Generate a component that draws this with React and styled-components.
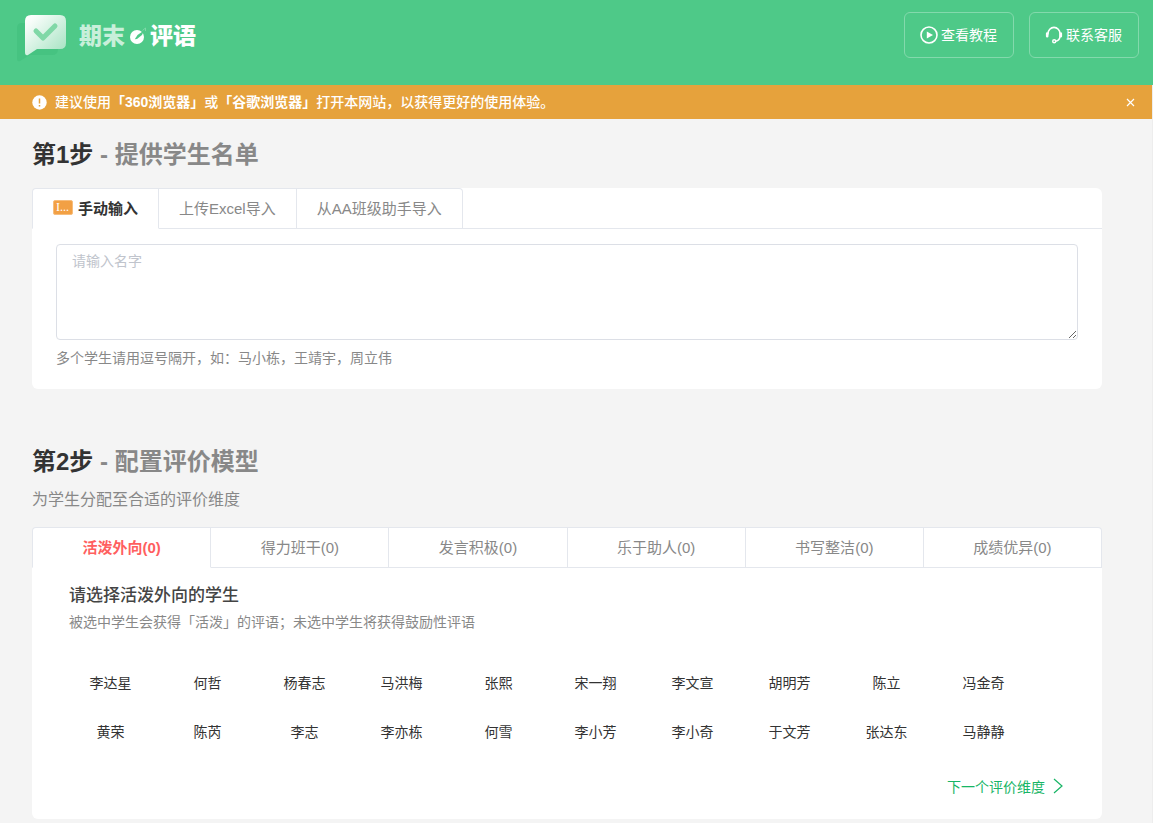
import React, { useState } from "react";
import styled, { createGlobalStyle } from "styled-components";

const GlobalStyle = createGlobalStyle`
  * { box-sizing: border-box; }
  body {
    margin: 0;
    background: #f4f4f4;
    color: #333;
    font-family: "Liberation Sans", "Noto Sans CJK SC", sans-serif;
    font-size: 14px;
  }
  button, textarea { font-family: inherit; }
  h1, h2, h3, p { margin: 0; }
`;

const Header = styled.header`
  display: flex;
  justify-content: space-between;
  align-items: flex-start;
  height: 85px;
  padding: 12px 14px 0 15px;
  background: #4ec988;
`;

const Brand = styled.h1`
  display: flex;
  align-items: center;
  height: 48px;
  color: #fff;
  font-size: 23px;
  font-weight: 900;
  line-height: 32px;
`;

const BrandIcon = styled.svg`
  display: block;
  margin-right: 12px;
`;

const BrandWord = styled.span`
  color: ${(p) => (p.$soft ? "#c8efda" : "#fff")};
`;

const BrandMark = styled.svg`
  display: block;
  margin: 0 2px 0 5px;
`;

const HeaderActions = styled.div`
  display: flex;
  gap: 15px;
`;

const OutlineButton = styled.button`
  display: flex;
  align-items: center;
  justify-content: center;
  gap: 3px;
  width: 110px;
  height: 46px;
  padding: 0 1px 2px 0;
  border: 1px solid #83d9ac;
  border-radius: 6px;
  background: transparent;
  color: #fff;
  font-size: 14px;
`;

const ButtonIcon = styled.svg`
  margin-top: 2px;
`;

const Content = styled.div`
  border-right: 1px solid #ededed;
`;

const Notice = styled.div`
  display: flex;
  align-items: center;
  height: 34px;
  padding: 0 16px 0 32px;
  background: #e6a23c;
  color: #fff;
  font-size: 14px;
`;

const NoticeText = styled.p`
  flex: 1;
  margin-left: 8px;
  font-weight: 500;
  line-height: 20px;
`;

const CloseButton = styled.button`
  display: flex;
  padding: 0;
  border: 0;
  background: transparent;
  color: #fff;
`;

const Main = styled.main`
  padding: 20px 50px 4px 32px;
`;

const Step = styled.section`
  & + & { margin-top: 57px; }
`;

const StepTitle = styled.h2`
  color: #888;
  font-size: 24px;
  font-weight: 700;
  line-height: 32px;
`;

const StepNumber = styled.span`
  color: #333;
`;

const StepHint = styled.p`
  margin-top: 10px;
  color: #888;
  font-size: 16px;
  line-height: 24px;
`;

const Card = styled.div`
  margin-top: ${(p) => (p.$tight ? "15px" : "17px")};
  border-radius: 6px;
  background: #fff;
`;

const TabBar = styled.div`
  display: ${(p) => (p.$fill ? "grid" : "flex")};
  grid-template-columns: calc(100% / 6 + 1px) repeat(5, 1fr);
  box-shadow: inset 0 -1px #e4e7ed;
`;

const Tab = styled.button`
  display: flex;
  align-items: center;
  justify-content: center;
  height: 41px;
  padding: 0 20px 2px;
  border: 1px solid #e4e7ed;
  border-left-width: 0;
  border-bottom-color: ${(p) => (p.$active ? "#fff" : "#e4e7ed")};
  background: #fff;
  color: ${(p) => (p.$active ? p.$accent : "#888")};
  font-size: 15px;
  font-weight: ${(p) => (p.$active ? 700 : 400)};

  &:first-child { border-left-width: 1px; border-top-left-radius: 4px; }
  &:last-child { border-top-right-radius: 4px; }
`;

const TabBadge = styled.span`
  width: 20px;
  height: 15px;
  margin-right: 5px;
  padding-left: 2px;
  border: 1px solid #f7bd7c;
  border-radius: 2px;
  background: #f2a044;
  color: #fff;
  font-family: "Liberation Serif", serif;
  font-size: 12px;
  font-weight: 400;
  line-height: 13px;
  text-align: left;
  white-space: nowrap;
`;

const NameEntry = styled.div`
  padding: 15px 24px 20px;
`;

const NameInput = styled.textarea`
  display: block;
  width: 100%;
  height: 96px;
  padding: 6px 15px;
  border: 1px solid #dcdfe6;
  border-radius: 4px;
  background: #fff;
  color: #606266;
  font-size: 14px;
  line-height: 21px;
  resize: vertical;

  &::placeholder { color: #c0c4cc; }
`;

const InputHint = styled.label`
  display: block;
  margin-top: 8px;
  color: #888;
  font-size: 14px;
  line-height: 21px;
`;

const Picker = styled.div`
  padding: 16px 37px 21px;
`;

const PickerTitle = styled.h3`
  color: #444;
  font-size: 17px;
  font-weight: 500;
  line-height: 24px;
`;

const PickerHint = styled.p`
  margin-top: 3px;
  color: #888;
  font-size: 14px;
  line-height: 22px;
`;

const StudentGrid = styled.div`
  display: grid;
  grid-template-columns: repeat(10, 97px);
  row-gap: 17px;
  margin: 33px 0 0 -7px;
`;

const Student = styled.button`
  height: 32px;
  padding: 0;
  border: 0;
  background: transparent;
  color: ${(p) => (p.$picked ? "#f56c6c" : "#333")};
  font-size: 14px;
`;

const NextButton = styled.button`
  display: flex;
  align-items: center;
  gap: 8px;
  height: 24px;
  margin: 27px 0 0 auto;
  padding: 0 2px 0 0;
  border: 0;
  background: transparent;
  color: #18b566;
  font-size: 14px;
`;

const importTabs = ["手动输入", "上传Excel导入", "从AA班级助手导入"];
const traits = ["活泼外向", "得力班干", "发言积极", "乐于助人", "书写整洁", "成绩优异"];
const students = [
  "李达星", "何哲", "杨春志", "马洪梅", "张熙", "宋一翔", "李文宣", "胡明芳", "陈立", "冯金奇",
  "黄荣", "陈芮", "李志", "李亦栋", "何雪", "李小芳", "李小奇", "于文芳", "张达东", "马静静",
];

function Logo() {
  return (
    <Brand>
      <BrandIcon width="52" height="52" viewBox="0 0 52 52" aria-hidden="true">
        <defs>
          <linearGradient id="bubble" x1="0" y1="0" x2="1" y2="1">
            <stop offset="0" stopColor="#fff" />
            <stop offset=".15" stopColor="#f8fdfa" />
            <stop offset=".85" stopColor="#b0e6c9" />
          </linearGradient>
        </defs>
        <path d="M7 13h30q6 0 6 6v20q0 6-6 6H15L5 51q-3 1-3-2V18q0-5 5-5z" fill="#46c381" />
        <path d="M16 5h29q6 0 6 6v22q0 6-6 6H22l-9 6q-3 1-3-3V11q0-6 6-6z" fill="url(#bubble)" />
        <path d="m21 21 7 7 12-12" fill="none" stroke="#80d8a7" strokeWidth="5" strokeLinecap="round" strokeLinejoin="round" />
      </BrandIcon>
      <BrandWord $soft>期末</BrandWord>
      <BrandMark width="18" height="18" viewBox="0 0 18 18" aria-hidden="true">
        <circle cx="7" cy="10" r="7" fill="#fff" />
        <path d="M4.8 12.3 7.5 8l6.5-4.5L12 8l-5 4z" fill="#4ec988" />
        <path d="m12.5 3.5 3-2.5v3" fill="none" stroke="#7dd8a7" />
      </BrandMark>
      <BrandWord>评语</BrandWord>
    </Brand>
  );
}

export default function App() {
  const [importTab, setImportTab] = useState(0);
  const [trait, setTrait] = useState(0);
  const [picked, setPicked] = useState([]);
  const [notice, setNotice] = useState(true);

  const toggle = (name) =>
    setPicked((list) => (list.includes(name) ? list.filter((n) => n !== name) : [...list, name]));

  return (
    <>
      <GlobalStyle />
      <Header>
        <Logo />
        <HeaderActions>
          <OutlineButton type="button">
            <ButtonIcon width="18" height="18" viewBox="0 0 18 18" aria-hidden="true">
              <circle cx="9" cy="9" r="8" fill="none" stroke="#fff" strokeWidth="1.6" />
              <path d="M6.8 5.6v6.8L13 9z" fill="#fff" />
            </ButtonIcon>
            查看教程
          </OutlineButton>
          <OutlineButton type="button">
            <ButtonIcon width="18" height="18" viewBox="0 0 18 18" fill="none" stroke="#fff" aria-hidden="true">
              <path d="M3 8.5V7.6a6 6.2 0 0 1 12 0V10q0 4.4-4.4 5.2" strokeWidth="1.6" />
              <path d="M2.2 7.6v2.6M15.8 7.6v2.6" strokeWidth="2.6" strokeLinecap="round" />
              <circle cx="9.2" cy="15.3" r="1.5" strokeWidth="1.4" />
            </ButtonIcon>
            联系客服
          </OutlineButton>
        </HeaderActions>
      </Header>
      <Content>
        {notice && (
          <Notice role="alert">
            <svg width="15" height="15" viewBox="0 0 15 15" aria-hidden="true">
              <circle cx="7.5" cy="7.5" r="7.2" fill="#fff" />
              <path d="M7.5 3.5v5M7.5 10v1.5" stroke="#e6a23c" strokeWidth="1.5" />
            </svg>
            <NoticeText>
              建议使用<strong>「360浏览器」</strong>或<strong>「谷歌浏览器」</strong>打开本网站，以获得更好的使用体验。
            </NoticeText>
            <CloseButton type="button" aria-label="关闭" onClick={() => setNotice(false)}>
              <svg width="11" height="11" viewBox="0 0 11 11" fill="none" stroke="currentColor" strokeWidth="1.2">
                <path d="m2 2 7 7M9 2 2 9" />
              </svg>
            </CloseButton>
          </Notice>
        )}
        <Main>
          <Step>
            <StepTitle><StepNumber>第1步</StepNumber> - 提供学生名单</StepTitle>
            <Card>
              <TabBar role="tablist">
                {importTabs.map((label, i) => (
                  <Tab key={label} type="button" role="tab" aria-selected={i === importTab}
                    $active={i === importTab} $accent="#333" onClick={() => setImportTab(i)}>
                    {i === 0 && <TabBadge aria-hidden="true">I...</TabBadge>}
                    {label}
                  </Tab>
                ))}
              </TabBar>
              <NameEntry>
                <NameInput id="names" placeholder="请输入名字" />
                <InputHint htmlFor="names">多个学生请用逗号隔开，如：马小栋，王靖宇，周立伟</InputHint>
              </NameEntry>
            </Card>
          </Step>
          <Step>
            <StepTitle><StepNumber>第2步</StepNumber> - 配置评价模型</StepTitle>
            <StepHint>为学生分配至合适的评价维度</StepHint>
            <Card $tight>
              <TabBar $fill role="tablist">
                {traits.map((label, i) => (
                  <Tab key={label} type="button" role="tab" aria-selected={i === trait}
                    $active={i === trait} $accent="#ff5f5f" onClick={() => setTrait(i)}>
                    {label}({i === trait ? picked.length : 0})
                  </Tab>
                ))}
              </TabBar>
              <Picker>
                <PickerTitle>请选择{traits[trait]}的学生</PickerTitle>
                <PickerHint>被选中学生会获得「活泼」的评语；未选中学生将获得鼓励性评语</PickerHint>
                <StudentGrid>
                  {students.map((name) => (
                    <Student key={name} type="button" aria-pressed={picked.includes(name)}
                      $picked={picked.includes(name)} onClick={() => toggle(name)}>
                      {name}
                    </Student>
                  ))}
                </StudentGrid>
                <NextButton type="button" onClick={() => setTrait((trait + 1) % traits.length)}>
                  下一个评价维度
                  <svg width="10" height="16" viewBox="0 0 10 16" fill="none" stroke="currentColor" strokeWidth="1.2" aria-hidden="true">
                    <path d="m1 1 8 7-8 7" />
                  </svg>
                </NextButton>
              </Picker>
            </Card>
          </Step>
        </Main>
      </Content>
    </>
  );
}
